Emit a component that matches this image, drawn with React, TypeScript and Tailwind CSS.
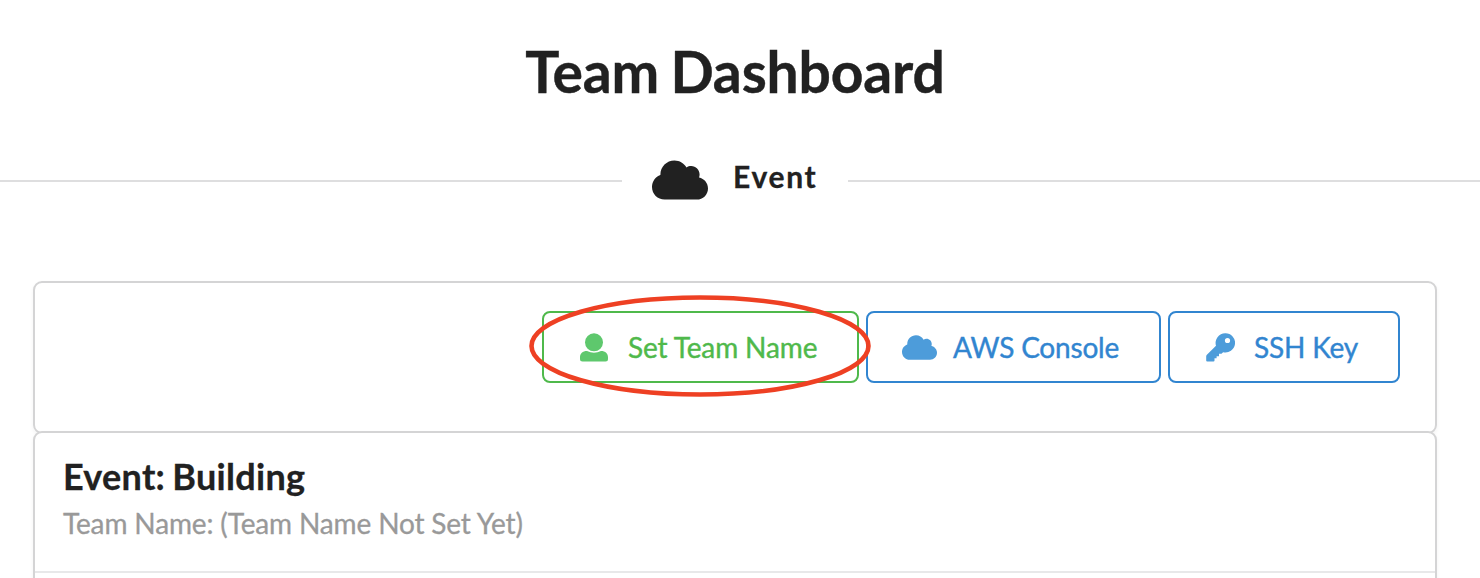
import { FaCloud } from "react-icons/fa";

function UserIcon() {
  return (
    <svg className="h-[29px] w-[28px] shrink-0" viewBox="0 0 28 29" fill="#5ec86d">
      <circle cx="14" cy="9.3" r="9" />
      <path d="M7 18Q14 21.5 21 18C25.5 18 28 20.5 28 24.5V26Q28 28.5 25.5 28.5H2.5Q0 28.5 0 26V24.5C0 20.5 2.5 18 7 18Z" />
    </svg>
  );
}

function KeyIcon() {
  return (
    <svg className="h-[29px] w-[29px] shrink-0" viewBox="0 0 29 29" fill="#4d9cda">
      <path
        fillRule="evenodd"
        d="M19.3.3a9.6 9.6 0 1 1-2.2 18.9L15.5 20.7H13V23.2H10.6V25.3H8.5V27.4Q8.5 28.4 7.5 28.4H1.2Q.2 28.4.2 27.4V23.3Q.2 22.5.9 21.8L10 12.7A9.6 9.6 0 0 1 19.3.3ZM21.5 4.9a2.6 2.6 0 1 0 0 5.2 2.6 2.6 0 0 0 0-5.2Z"
      />
    </svg>
  );
}

export default function App() {
  return (
    <main className="h-[578px] w-[1480px] overflow-hidden bg-white font-['Lato',sans-serif] text-[#212121]">
      <h1 className="w-[1470px] pt-[35px] text-center text-[57px] font-bold leading-[72px] tracking-[-0.15px] [word-spacing:-2.5px] [-webkit-text-stroke:0.4px]">
        Team Dashboard
      </h1>
      <div className="mt-[39px] flex h-[70px] items-center">
        <div className="h-[2px] w-[622px] bg-[#dededf]" />
        <div className="flex w-[226px] items-center pl-[30px]">
          <FaCloud className="-mt-[2px] h-[56px] w-[56px] shrink-0" />
          <span className="-mt-[10px] ml-[25px] text-[30px] font-bold leading-[36px] tracking-[1.7px] [-webkit-text-stroke:0.3px]">
            Event
          </span>
        </div>
        <div className="h-[2px] flex-1 bg-[#dededf]" />
      </div>
      <div className="mt-[65px] ml-[33px] w-[1404px]">
        <section className="relative flex h-[153px] justify-end gap-[7px] rounded-[9px] border-2 border-[#d4d4d5] pt-[28px] pr-[35px] shadow-[0_2px_4px_rgba(34,36,38,0.05)]">
          <button className="flex h-[72px] w-[317px] items-center rounded-[8px] border-2 border-[#4fb94b] pl-[36px] text-[28px] tracking-[-0.12px] text-[#4fb94b] [-webkit-text-stroke:0.4px]">
            <UserIcon />
            <span className="ml-[20px]">Set Team Name</span>
          </button>
          <button className="flex h-[72px] w-[295px] items-center rounded-[8px] border-2 border-[#3185d0] pl-[34px] text-[28px] tracking-[-0.2px] text-[#3185d0] [-webkit-text-stroke:0.4px]">
            <FaCloud className="size-[35px] shrink-0 text-[#4d9cda]" />
            <span className="ml-[16px]">AWS Console</span>
          </button>
          <button className="flex h-[72px] w-[232px] items-center rounded-[8px] border-2 border-[#3185d0] pl-[36px] text-[28px] tracking-[-0.18px] text-[#3185d0] [-webkit-text-stroke:0.4px]">
            <KeyIcon />
            <span className="ml-[19px]">SSH Key</span>
          </button>
          <svg className="absolute top-[10px] left-[493px] h-[108px] w-[350px]" viewBox="0 0 350 108" fill="none">
            <ellipse cx="172" cy="53" rx="168.5" ry="48.5" stroke="#ee4023" strokeWidth="4.6" />
          </svg>
        </section>
        <section className="relative -mt-[3px] h-[200px] rounded-t-[9px] border-2 border-[#d4d4d5] bg-white shadow-[0_2px_4px_rgba(34,36,38,0.05)]">
          <div className="h-[140px] border-b-2 border-[#e8e8e9] pt-[21px] pl-[28px]">
            <h2 className="text-[36px] font-bold leading-[44px] tracking-[0.28px] [word-spacing:-1.8px] [-webkit-text-stroke:0.3px]">Event: Building</h2>
            <p className="mt-[8px] text-[28px] leading-[34px] tracking-[-0.14px] text-[#999] [-webkit-text-stroke:0.3px]">
              Team Name: (Team Name Not Set Yet)
            </p>
          </div>
        </section>
      </div>
    </main>
  );
}
